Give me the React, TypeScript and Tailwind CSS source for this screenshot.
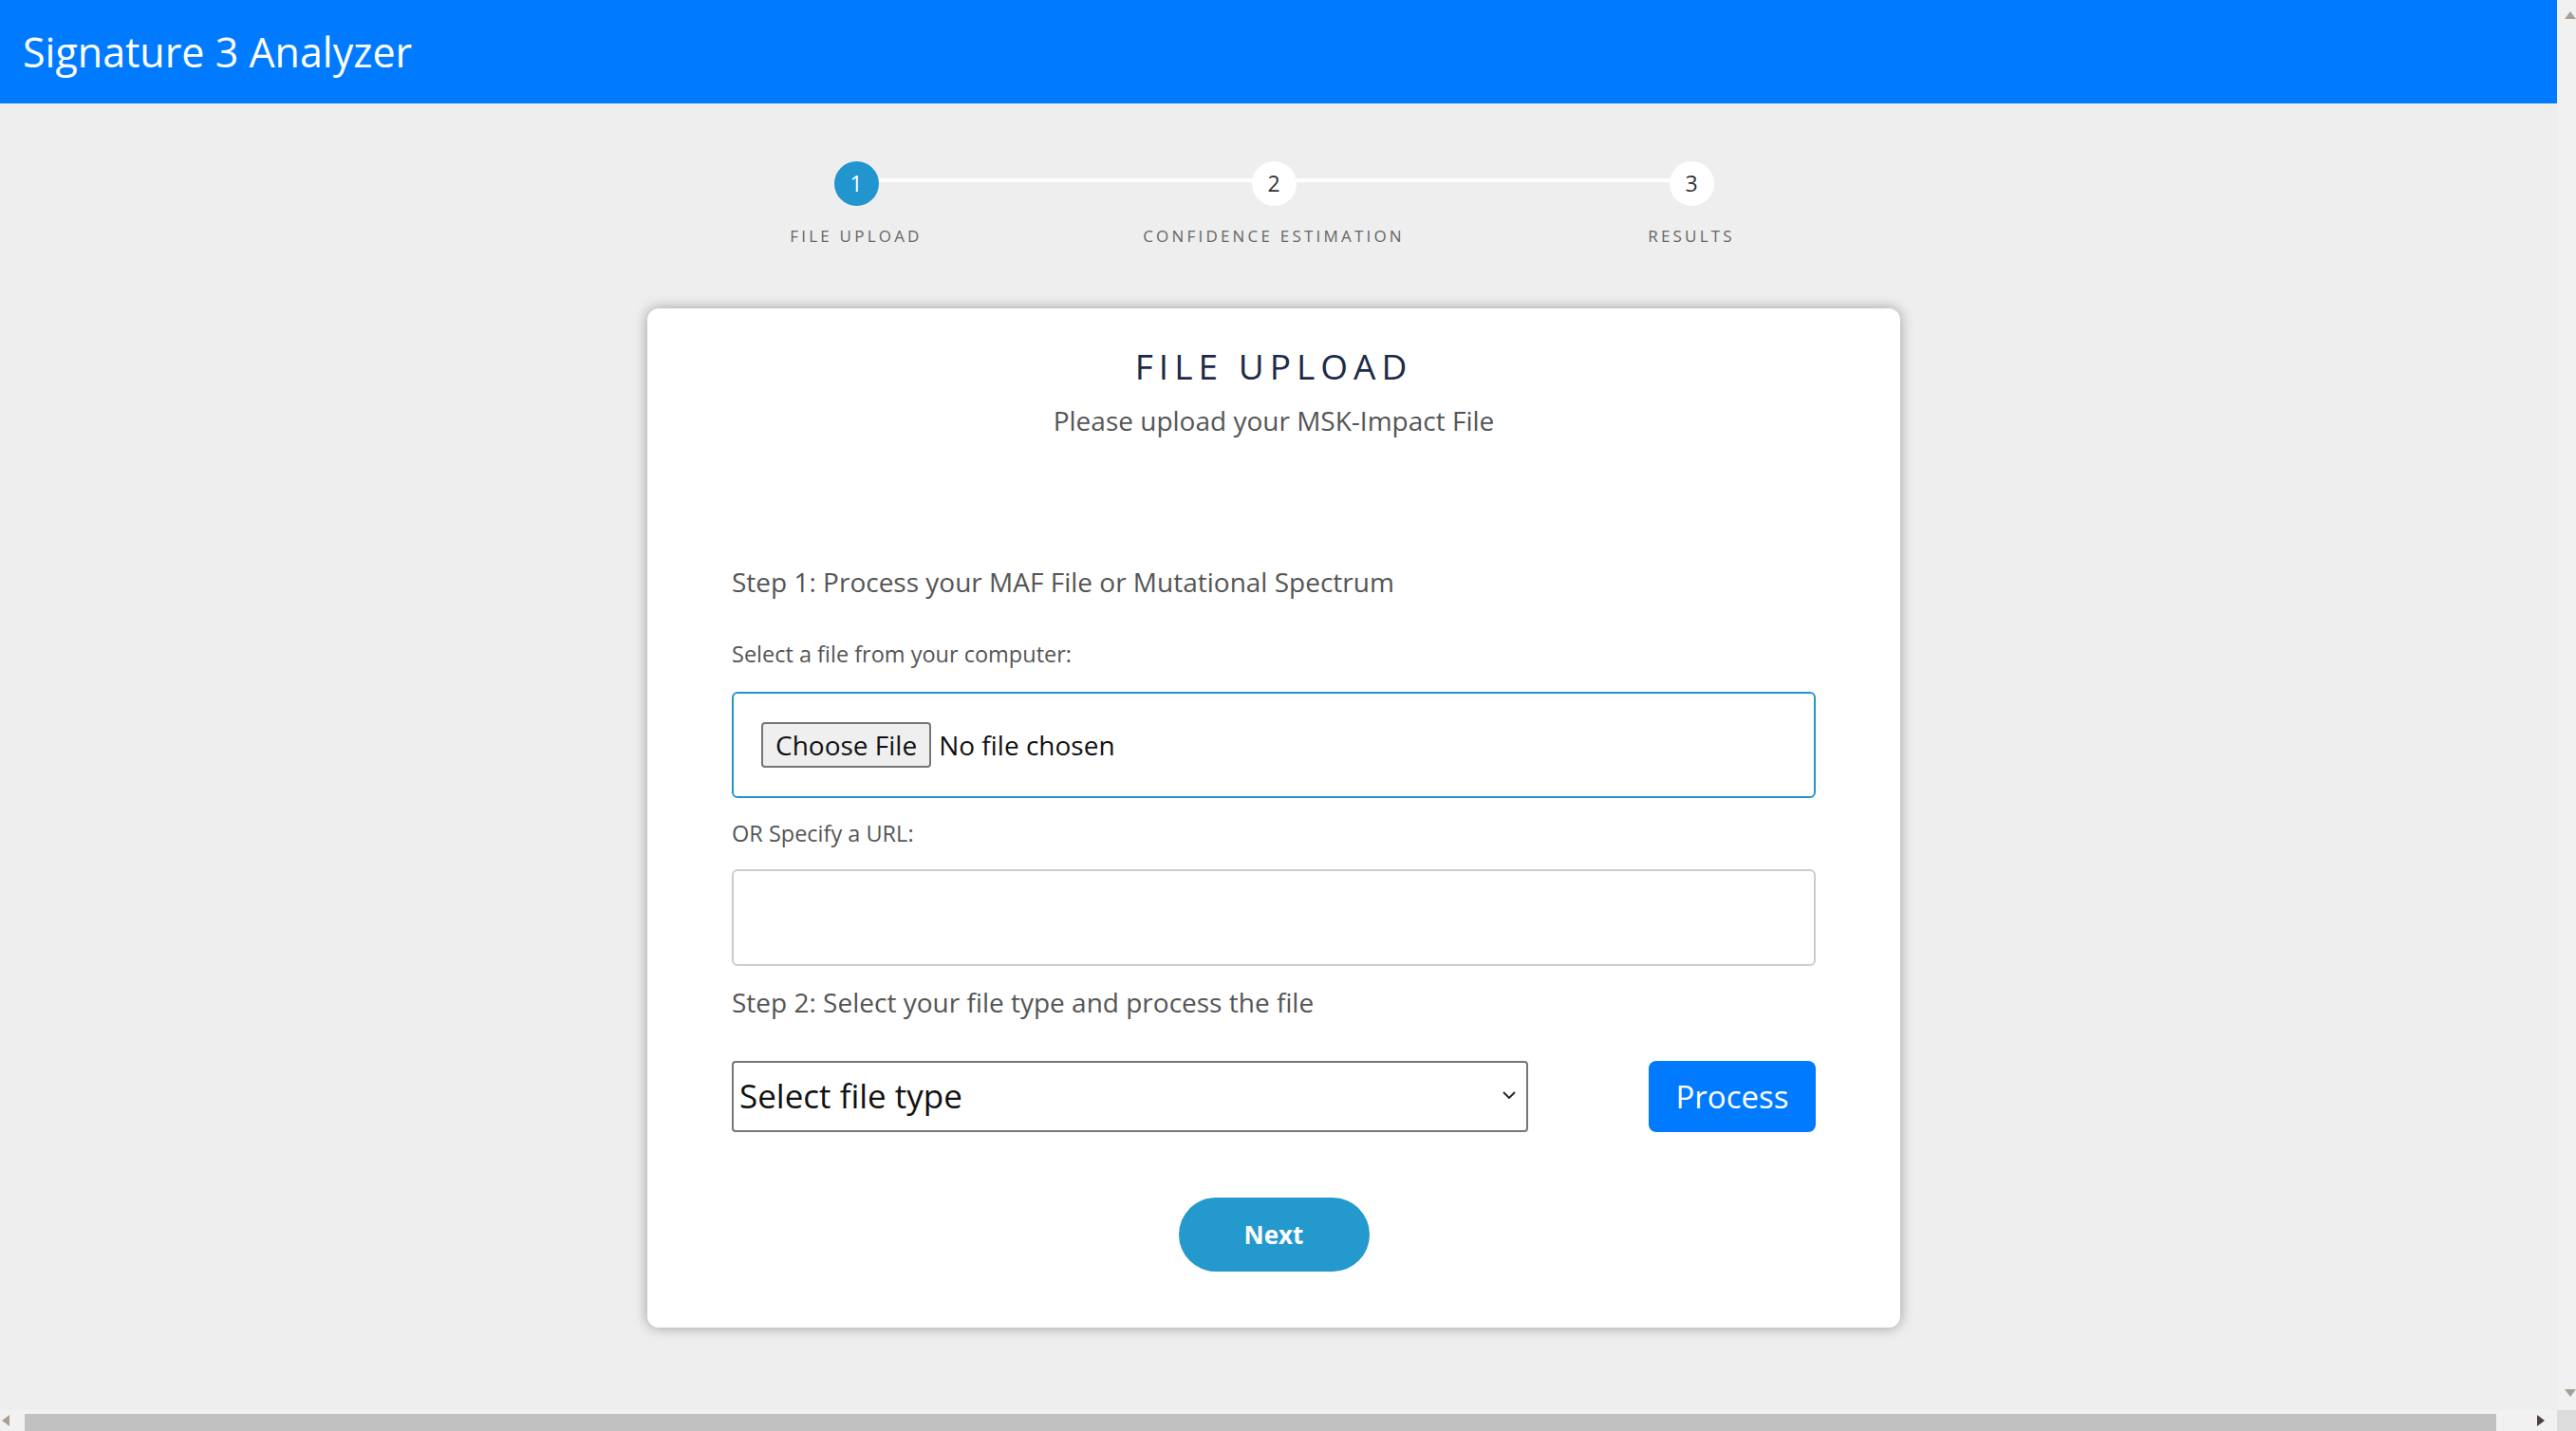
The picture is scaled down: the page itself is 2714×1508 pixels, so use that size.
import { useState } from "react";

const steps = ["File Upload", "Confidence Estimation", "Results"];

function Triangle({ dir, color }: { dir: "up" | "down" | "left" | "right"; color: string }) {
  const paths = {
    up: "M0 8 L6 0 L12 8 Z",
    down: "M0 0 L12 0 L6 8 Z",
    left: "M8 0 L8 12 L0 6 Z",
    right: "M0 0 L8 6 L0 12 Z",
  };
  const vertical = dir === "up" || dir === "down";
  return (
    <svg width={vertical ? 12 : 8} height={vertical ? 8 : 12} viewBox={vertical ? "0 0 12 8" : "0 0 8 12"}>
      <path d={paths[dir]} fill={color} />
    </svg>
  );
}

export default function App() {
  const [currentStep] = useState(0);
  const [fileType, setFileType] = useState("");
  const [url, setUrl] = useState("");

  return (
    <div className="h-screen w-screen flex flex-col overflow-hidden font-['Open_Sans','Lato',sans-serif] text-[#555]">
      <div className="flex-1 min-h-0 flex">
        <main className="flex-1 min-w-0 bg-[#eeeeee]">
          <header className="h-[109px] bg-[#007bff] flex items-center pl-[24px]">
            <h1 className="text-[43px] text-white leading-none">Signature 3 Analyzer</h1>
          </header>

          <div className="flex flex-col items-center pr-[10px]">
            {/* stepper */}
            <div className="relative w-[1320px] mt-[61px] grid grid-cols-3">
              <div className="absolute left-[220px] right-[220px] top-[18px] h-[4px] bg-white" />
              {steps.map((s, i) => (
                <div key={s} className="relative flex flex-col items-center">
                  <div
                    className={`w-[47px] h-[47px] rounded-full flex items-center justify-center text-[23px] ${
                      i === currentStep ? "bg-[#2196ce] text-white" : "bg-white text-[#333]"
                    }`}
                  >
                    {i + 1}
                  </div>
                  <div className="mt-[20px] leading-[24px] text-[17px] uppercase tracking-[3.2px] text-[#666]">
                    {s}
                  </div>
                </div>
              ))}
            </div>

            {/* card */}
            <div className="mt-[64px] w-[1320px] bg-white rounded-[12px] shadow-[0_0_14px_rgba(0,0,0,0.35)] pt-[41px] pb-[59px] px-[89px] flex flex-col">
              <h2 className="text-center text-[37px] leading-[40px] tracking-[6px] text-[#1d2a48]">FILE UPLOAD</h2>
              <p className="mt-[20px] text-center text-[28px] leading-[34px] text-[#555]">
                Please upload your MSK-Impact File
              </p>

              <p className="mt-[136px] text-[28px] leading-[34px] text-[#555]">
                Step 1: Process your MAF File or Mutational Spectrum
              </p>
              <label className="mt-[45px] text-[23.5px] leading-[28px] text-[#555]">
                Select a file from your computer:
              </label>
              <div className="mt-[26px] h-[112px] border-2 border-[#2196ce] rounded-[6px] flex items-center pl-[29px]">
                <input
                  type="file"
                  className="text-[28px] text-[#111] file:bg-[#efefef] file:border-2 file:border-[#767676] file:rounded-[4px] file:px-[13px] file:h-[48px] file:mr-[8px] file:text-[#111]"
                />
              </div>

              <label className="mt-[23px] text-[23.5px] leading-[28px] text-[#555]">OR Specify a URL:</label>
              <input
                type="text"
                value={url}
                onChange={(e) => setUrl(e.target.value)}
                className="mt-[24px] h-[102px] border-2 border-[#cccccc] rounded-[6px] px-[16px] text-[28px] outline-none"
              />

              <p className="mt-[21px] text-[28px] leading-[34px] text-[#555]">
                Step 2: Select your file type and process the file
              </p>

              <div className="mt-[45px] flex items-center justify-between">
                <div className="relative w-[839px] h-[75px]">
                  <select
                    value={fileType}
                    onChange={(e) => setFileType(e.target.value)}
                    className="appearance-none w-full h-full border-2 border-[#767676] rounded-[4px] pl-[6px] text-[35px] text-[#111] bg-white outline-none"
                  >
                    <option value="">Select file type</option>
                    <option value="maf">MAF</option>
                    <option value="spectrum">Mutational Spectrum</option>
                  </select>
                  <svg
                    className="absolute right-[13px] top-[32px] pointer-events-none"
                    width="14"
                    height="9"
                    viewBox="0 0 14 9"
                    fill="none"
                    stroke="#222"
                    strokeWidth="1.8"
                  >
                    <path d="M1 1l6 6 6-6" />
                  </svg>
                </div>
                <button className="w-[176px] h-[75px] rounded-[8px] bg-[#007bff] text-white text-[33px]">
                  Process
                </button>
              </div>

              <div className="mt-[69px] flex justify-center">
                <button className="w-[201px] h-[78px] rounded-full bg-[#2399ce] text-white text-[26px] font-bold">
                  Next
                </button>
              </div>
            </div>
          </div>
        </main>

        {/* vertical scrollbar */}
        <div className="w-[20px] bg-[#f1f1f1] flex flex-col items-end justify-between pt-[12px] pb-[14px]">
          <Triangle dir="up" color="#a8a097" />
          <Triangle dir="down" color="#a8a097" />
        </div>
      </div>

      {/* horizontal scrollbar */}
      <div className="h-[22px] flex bg-[#f1f1f1]">
        <div className="flex-1 flex items-center pl-[2px] pr-[13px]">
          <Triangle dir="left" color="#a8a097" />
          <div className="ml-[16px] mr-[43px] flex-1 h-[18px] mt-[4px] bg-[#c1c1c1]" />
          <Triangle dir="right" color="#4a4040" />
        </div>
        <div className="w-[20px] bg-[#dcdcdc]" />
      </div>
    </div>
  );
}
